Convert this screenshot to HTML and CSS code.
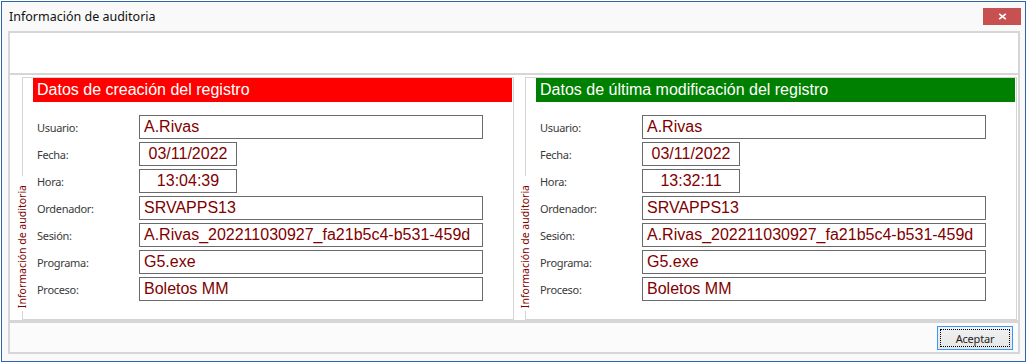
FILE: index.html
```html
<!DOCTYPE html>
<html lang="es">
<head>
<meta charset="utf-8">
<title>Información de auditoria</title>
<link rel="stylesheet" href="styles.css">
</head>
<body>
<div class="window">
  <div class="titlebar">
    <span class="title">Información de auditoria</span>
    <button class="close" aria-label="Cerrar"><svg width="9" height="7" viewBox="0 0 9 7"><path d="M1.2 0.8 L7.8 6.2 M7.8 0.8 L1.2 6.2" stroke="#fff" stroke-width="1.7" fill="none"/></svg></button>
  </div>
  <div class="frame">
    <div class="toppanel"></div>
    <div class="content">
      <section class="group">
        <div class="rail"><span class="rail-line top"></span><span class="caption">Información de auditoria</span><span class="rail-line bottom"></span></div>
        <div class="group-main">
          <div class="header red">Datos de creación del registro</div>
          <div class="rows">
            <div class="row"><span class="label">Usuario:</span><span class="field wide">A.Rivas</span></div>
            <div class="row"><span class="label">Fecha:</span><span class="field short">03/11/2022</span></div>
            <div class="row"><span class="label">Hora:</span><span class="field short">13:04:39</span></div>
            <div class="row"><span class="label">Ordenador:</span><span class="field wide">SRVAPPS13</span></div>
            <div class="row"><span class="label">Sesión:</span><span class="field wide">A.Rivas_202211030927_fa21b5c4-b531-459d</span></div>
            <div class="row"><span class="label">Programa:</span><span class="field wide">G5.exe</span></div>
            <div class="row"><span class="label">Proceso:</span><span class="field wide">Boletos MM</span></div>
          </div>
        </div>
      </section>
      <section class="group">
        <div class="rail"><span class="rail-line top"></span><span class="caption">Información de auditoria</span><span class="rail-line bottom"></span></div>
        <div class="group-main">
          <div class="header green">Datos de última modificación del registro</div>
          <div class="rows">
            <div class="row"><span class="label">Usuario:</span><span class="field wide">A.Rivas</span></div>
            <div class="row"><span class="label">Fecha:</span><span class="field short">03/11/2022</span></div>
            <div class="row"><span class="label">Hora:</span><span class="field short">13:32:11</span></div>
            <div class="row"><span class="label">Ordenador:</span><span class="field wide">SRVAPPS13</span></div>
            <div class="row"><span class="label">Sesión:</span><span class="field wide">A.Rivas_202211030927_fa21b5c4-b531-459d</span></div>
            <div class="row"><span class="label">Programa:</span><span class="field wide">G5.exe</span></div>
            <div class="row"><span class="label">Proceso:</span><span class="field wide">Boletos MM</span></div>
          </div>
        </div>
      </section>
    </div>
    <div class="bottompanel"><button class="accept">Aceptar</button></div>
  </div>
</div>
</body>
</html>
```
FILE: styles.css
```css
html, body {
  margin: 0;
  padding: 0;
  background: #ffffff;
  font-family: "Noto Sans", "Liberation Sans", sans-serif;
}

.window {
  margin: 1px 0 0 1px;
  width: 1025px;
  height: 361px;
  box-sizing: border-box;
  border: 1px solid #2f65ac;
  background: #f9f9f9;
  display: flex;
  flex-direction: column;
}

.titlebar {
  height: 29px;
  display: flex;
  align-items: center;
  padding-left: 7px;
  flex-shrink: 0;
}

.title {
  font-size: 12.5px;
  color: #111;
}

.close {
  margin-left: auto;
  margin-right: 4px;
  width: 38px;
  height: 17px;
  border: none;
  padding: 0;
  background: #c75050;
  display: flex;
  align-items: center;
  justify-content: center;
}

.frame {
  margin: 0 5px 7px 6px;
  height: 323px;
  box-sizing: border-box;
  border: 2px solid #d6d6d6;
  background: #ffffff;
  display: flex;
  flex-direction: column;
}

.toppanel {
  height: 40px;
  flex-shrink: 0;
}

.content {
  height: 245px;
  box-sizing: content-box;
  border-top: 2px solid #d6d6d6;
  padding: 2px 0 0 12px;
  box-sizing: border-box;
  height: 247px;
  display: flex;
  gap: 11px;
  flex-shrink: 0;
}

.group {
  width: 492px;
  height: 243px;
  box-sizing: border-box;
  border: 1px solid #d5d5d5;
  border-left: none;
  display: flex;
}

.rail {
  width: 13px;
  margin-left: -6px;
  display: flex;
  flex-direction: column;
  align-items: center;
  flex-shrink: 0;
}

.rail-line {
  width: 1px;
  background: #d5d5d5;
}

.rail-line.top {
  flex: 1;
}

.rail-line.bottom {
  height: 8px;
}

.caption {
  writing-mode: vertical-rl;
  transform: rotate(180deg);
  font-size: 10.5px;
  line-height: 13px;
  color: #800000;
  padding: 3px 0 9px;
  white-space: nowrap;
}

.group-main {
  flex: 1;
  display: flex;
  flex-direction: column;
}

.header {
  height: 24px;
  margin: 0 1px 0 4px;
  padding-left: 4px;
  font-family: "Liberation Sans", Arial, sans-serif;
  font-size: 16px;
  line-height: 24px;
  color: #ffffff;
}

.header.red {
  background: #ff0000;
}

.header.green {
  background: #008000;
}

.rows {
  margin-top: 13px;
  padding-left: 8px;
  display: flex;
  flex-direction: column;
  gap: 3px;
}

.row {
  display: flex;
  align-items: center;
  height: 24px;
}

.label {
  width: 102px;
  font-size: 11px;
  letter-spacing: -0.3px;
  color: #3a3a3a;
}

.field {
  height: 24px;
  box-sizing: border-box;
  border: 1px solid #6a6a6a;
  padding: 0 4px;
  font-family: "Liberation Sans", Arial, sans-serif;
  font-size: 16px;
  line-height: 22px;
  color: #800000;
  white-space: nowrap;
  overflow: hidden;
  background: #ffffff;
}

.field.wide {
  width: 344px;
}

.field.short {
  width: 98px;
  padding: 0;
  text-align: center;
}

.bottompanel {
  flex: 1;
  border-top: 3px solid #d6d6d6;
  background: #fbfbfb;
  display: flex;
  justify-content: flex-end;
  align-items: flex-start;
  padding: 3px 5px 0 0;
}

.accept {
  width: 76px;
  height: 24px;
  box-sizing: border-box;
  border: 1px solid #3399ff;
  background: linear-gradient(#f1f1f1, #e6e6e6);
  outline: 1px dotted #000;
  outline-offset: -4px;
  font-family: "Noto Sans", sans-serif;
  font-size: 11px;
  letter-spacing: -0.2px;
  color: #1e1e1e;
  padding: 0;
}
```
